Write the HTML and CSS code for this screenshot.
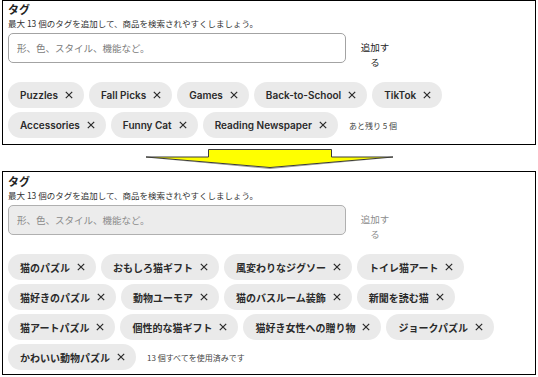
FILE: index.html
```html
<!DOCTYPE html>
<html lang="ja">
<head>
<meta charset="utf-8">
<link rel="stylesheet" href="styles.css">
</head>
<body>
<section class="panel panel-top">
  <div class="title">タグ</div>
  <div class="subtitle">最大 13 個のタグを追加して、商品を検索されやすくしましょう。</div>
  <div class="entry">
    <input class="input" type="text" placeholder="形、色、スタイル、機能など。">
    <div class="add">追加する</div>
  </div>
  <div class="chips">
    <span class="chip">Puzzles<svg class="x" viewBox="0 0 8 8"><path d="M0.8 0.8L7.2 7.2M7.2 0.8L0.8 7.2"/></svg></span>
    <span class="chip">Fall Picks<svg class="x" viewBox="0 0 8 8"><path d="M0.8 0.8L7.2 7.2M7.2 0.8L0.8 7.2"/></svg></span>
    <span class="chip">Games<svg class="x" viewBox="0 0 8 8"><path d="M0.8 0.8L7.2 7.2M7.2 0.8L0.8 7.2"/></svg></span>
    <span class="chip">Back-to-School<svg class="x" viewBox="0 0 8 8"><path d="M0.8 0.8L7.2 7.2M7.2 0.8L0.8 7.2"/></svg></span>
    <span class="chip">TikTok<svg class="x" viewBox="0 0 8 8"><path d="M0.8 0.8L7.2 7.2M7.2 0.8L0.8 7.2"/></svg></span>
    <span class="chip">Accessories<svg class="x" viewBox="0 0 8 8"><path d="M0.8 0.8L7.2 7.2M7.2 0.8L0.8 7.2"/></svg></span>
    <span class="chip">Funny Cat<svg class="x" viewBox="0 0 8 8"><path d="M0.8 0.8L7.2 7.2M7.2 0.8L0.8 7.2"/></svg></span>
    <span class="chip">Reading Newspaper<svg class="x" viewBox="0 0 8 8"><path d="M0.8 0.8L7.2 7.2M7.2 0.8L0.8 7.2"/></svg></span>
    <span class="note">あと残り 5 個</span>
  </div>
</section>

<div class="arrow">
  <svg width="538" height="26" viewBox="0 0 538 26">
    <polygon class="arrow-shadow" points="146,12.5 270,24 393,12.5 270,23"/>
    <polygon class="arrow-body" points="208.5,4.5 331.5,4.5 331.5,12 393,12 270,22.5 146,12 208.5,12"/>
  </svg>
</div>

<section class="panel panel-bottom">
  <div class="title">タグ</div>
  <div class="subtitle">最大 13 個のタグを追加して、商品を検索されやすくしましょう。</div>
  <div class="entry">
    <input class="input input-disabled" type="text" placeholder="形、色、スタイル、機能など。" disabled>
    <div class="add add-disabled">追加する</div>
  </div>
  <div class="chips">
    <span class="chip">猫のパズル<svg class="x" viewBox="0 0 8 8"><path d="M0.8 0.8L7.2 7.2M7.2 0.8L0.8 7.2"/></svg></span>
    <span class="chip">おもしろ猫ギフト<svg class="x" viewBox="0 0 8 8"><path d="M0.8 0.8L7.2 7.2M7.2 0.8L0.8 7.2"/></svg></span>
    <span class="chip">風変わりなジグソー<svg class="x" viewBox="0 0 8 8"><path d="M0.8 0.8L7.2 7.2M7.2 0.8L0.8 7.2"/></svg></span>
    <span class="chip">トイレ猫アート<svg class="x" viewBox="0 0 8 8"><path d="M0.8 0.8L7.2 7.2M7.2 0.8L0.8 7.2"/></svg></span>
    <span class="chip">猫好きのパズル<svg class="x" viewBox="0 0 8 8"><path d="M0.8 0.8L7.2 7.2M7.2 0.8L0.8 7.2"/></svg></span>
    <span class="chip">動物ユーモア<svg class="x" viewBox="0 0 8 8"><path d="M0.8 0.8L7.2 7.2M7.2 0.8L0.8 7.2"/></svg></span>
    <span class="chip">猫のバスルーム装飾<svg class="x" viewBox="0 0 8 8"><path d="M0.8 0.8L7.2 7.2M7.2 0.8L0.8 7.2"/></svg></span>
    <span class="chip">新聞を読む猫<svg class="x" viewBox="0 0 8 8"><path d="M0.8 0.8L7.2 7.2M7.2 0.8L0.8 7.2"/></svg></span>
    <span class="chip">猫アートパズル<svg class="x" viewBox="0 0 8 8"><path d="M0.8 0.8L7.2 7.2M7.2 0.8L0.8 7.2"/></svg></span>
    <span class="chip">個性的な猫ギフト<svg class="x" viewBox="0 0 8 8"><path d="M0.8 0.8L7.2 7.2M7.2 0.8L0.8 7.2"/></svg></span>
    <span class="chip">猫好き女性への贈り物<svg class="x" viewBox="0 0 8 8"><path d="M0.8 0.8L7.2 7.2M7.2 0.8L0.8 7.2"/></svg></span>
    <span class="chip">ジョークパズル<svg class="x" viewBox="0 0 8 8"><path d="M0.8 0.8L7.2 7.2M7.2 0.8L0.8 7.2"/></svg></span>
    <span class="chip">かわいい動物パズル<svg class="x" viewBox="0 0 8 8"><path d="M0.8 0.8L7.2 7.2M7.2 0.8L0.8 7.2"/></svg></span>
    <span class="note">13 個すべてを使用済みです</span>
  </div>
</section>
</body>
</html>
```

FILE: styles.css
```css
html, body {
  margin: 0;
  padding: 0;
  background: #ffffff;
}

body {
  font-family: Inter, "Noto Sans CJK JP", sans-serif;
  color: #222222;
}

.panel {
  box-sizing: border-box;
  width: 534px;
  margin-left: 2px;
  border: 1px solid #000000;
  padding: 2px 6px 0 5px;
}

.panel-top {
  height: 145px;
}

.panel-bottom {
  height: 204px;
  padding-top: 3px;
}

.title {
  font-family: "Noto Sans CJK JP", sans-serif;
  font-weight: 700;
  font-size: 11px;
  line-height: 13px;
  margin-bottom: 2px;
  color: #222222;
}

.subtitle {
  font-family: "Noto Sans CJK JP", sans-serif;
  font-size: 8.5px;
  line-height: 11px;
  color: #333333;
}

.entry {
  display: flex;
  align-items: flex-start;
  height: 30px;
  margin-top: 4px;
}

.input {
  box-sizing: border-box;
  width: 338px;
  height: 30px;
  margin: 0;
  padding: 0 8px;
  border: 1px solid #a3a3a3;
  border-radius: 5px;
  background: #ffffff;
  font-family: "Noto Sans CJK JP", sans-serif;
  font-size: 9.5px;
  outline: none;
}

.input::placeholder {
  color: #7a7a7a;
  opacity: 1;
}

.input-disabled {
  background: #ececec;
  border-color: #b0b0b0;
}

.input-disabled::placeholder {
  color: #8a8a8a;
}

.add {
  width: 30px;
  margin: 7px 0 0 14px;
  font-family: "Noto Sans CJK JP", sans-serif;
  font-size: 9.5px;
  line-height: 15px;
  text-align: center;
  color: #222222;
}

.add-disabled {
  color: #8c8c8c;
}

.chips {
  display: flex;
  flex-wrap: wrap;
  align-items: center;
  gap: 4px 5px;
  width: 510px;
  margin-top: 19px;
}

.chip {
  display: inline-flex;
  align-items: center;
  gap: 7px;
  height: 26px;
  padding: 0 11px 0 12px;
  border-radius: 13px;
  background: #eaeaea;
  font-family: Inter, "Noto Sans CJK JP", sans-serif;
  font-weight: 600;
  font-size: 10px;
  color: #2a2a2a;
  white-space: nowrap;
}

.x {
  width: 8px;
  height: 8px;
  flex: none;
}

.x path {
  stroke: #2a2a2a;
  stroke-width: 1.2;
  fill: none;
}

.note {
  margin-left: 6px;
  font-family: "Noto Sans CJK JP", sans-serif;
  font-size: 8px;
  color: #444444;
}

.arrow {
  height: 26px;
}

.arrow svg {
  display: block;
}

.arrow-body {
  fill: #ffff00;
  stroke: #3a3a3a;
  stroke-width: 1;
  stroke-linejoin: miter;
}

.arrow-shadow {
  fill: #9a9a9a;
}
```
